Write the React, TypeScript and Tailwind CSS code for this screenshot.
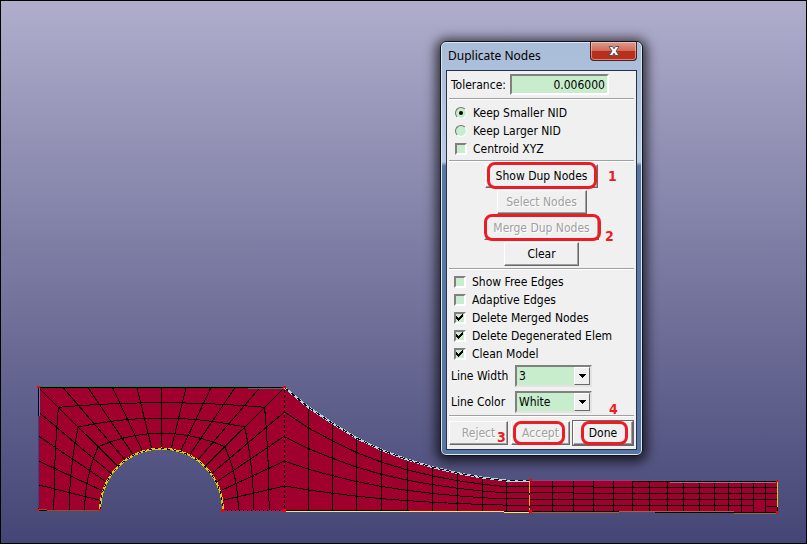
import type { ReactNode } from 'react'
import { clsx } from 'clsx'

type Point = [number, number]

const mix = (a: Point, b: Point, t: number): Point => [a[0] + (b[0] - a[0]) * t, a[1] + (b[1] - a[1]) * t]
const toPath = (points: Point[]) => 'M' + points.map((p) => `${p[0].toFixed(1)} ${p[1].toFixed(1)}`).join('L')

// Plate with the circular cut-out: outer edge, inner arc
const outer: Point[] = [
    [38.5, 510], [38.5, 485], [38.5, 461], [38.5, 436], [38.5, 412], [38.5, 387.5],
    [63, 387.5], [88, 387.5], [112.5, 387.5], [137, 387.5], [161.5, 387.5],
    [186, 387.5], [211, 387.5], [235, 387.5], [260, 387.5], [284.5, 387.5],
    [284.5, 412], [284.5, 436], [284.5, 461], [284.5, 486], [284.5, 510],
]
const arc: Point[] = outer.map((_, i) => {
    const a = Math.PI - (i * Math.PI) / 20
    return [161.5 + 61.5 * Math.cos(a), 510 - 61.5 * Math.sin(a)]
})

// Fillet and shank: top and bottom node of every column
const curve: Point[] = [
    [284.5, 387.5], [308, 407], [332, 423], [356.5, 438], [381.5, 450], [407, 459.5],
    [432, 467], [457, 473], [482, 477.5], [506, 480.5], [529.5, 480.5],
]
const shank: Point[] = [529.5, 552.5, 573.5, 593.5, 613.5, 632.5, 649.5, 667.5, 683.5, 699.5, 714.5, 728.5, 741.5, 753.5, 765.5, 777.5].map(
    (x) => [x, 480.5 + (x - 529.5) / 200],
)
const floor = (p: Point): Point => [p[0], 510.5 + (p[0] - 284.5) / 300]

function ModelMesh() {
    const rings = [0.25, 0.5, 0.75].map((t) => toPath(outer.map((p, i) => mix(p, arc[i], t))))
    const spokes = outer.map((p, i) => toPath([p, arc[i]]))
    const strips = [curve, shank].flatMap((top) => [
        ...[0.2, 0.4, 0.6, 0.8].map((t) => toPath(top.map((p) => mix(p, floor(p), t)))),
        ...top.map((p) => toPath([p, floor(p)])),
    ])

    return (
        <svg width="807" height="544" viewBox="0 0 807 544" className="absolute -top-px -left-px" role="img" aria-label="Finite element mesh">
            <g fill="#a0002e">
                <path d={toPath([...outer, ...[...arc].reverse()]) + 'Z'} />
                <path d={toPath([...curve, ...shank, [777.5, 512], [284.5, 510.5]]) + 'Z'} />
            </g>
            <g fill="none" stroke="#000" shapeRendering="crispEdges">
                {[...rings, ...spokes, ...strips].map((d, i) => (
                    <path key={i} d={d} />
                ))}
                <path d={toPath(outer)} />
                <path d="M38.5 510.5H100M223 510.5H284.5L529.5 511.5L777.5 512.5" />
            </g>
            <g fill="none" shapeRendering="crispEdges">
                <path d={toPath(arc)} stroke="#dccd00" strokeWidth="2" />
                <path d={toPath(arc)} stroke="#000" strokeDasharray="3 3" />
                <path d="M39 386.5H248" stroke="#1f8a4c" />
                <path d="M248 388.5H284" stroke="#51735c" />
                <path d="M39.5 388V416" stroke="#4c7fc4" />
                <path d="M38.5 416V508" stroke="#294a8a" />
                <path d="M39 509.5H47M47 510.5H100" stroke="#9a4b20" />
                <path d="M224 510.5H284" stroke="#d0003c" strokeDasharray="3 1" />
                <path d="M284.5 388V508" stroke="#d0003c" strokeDasharray="2 3" />
                <path d={toPath(curve)} stroke="#add8e0" strokeWidth="2" />
                <path d={toPath(curve)} stroke="#000" strokeDasharray="5 3" />
                <path d={toPath(shank)} stroke="#000" />
                <path d="M285 511.5H504M504 512.5H529" stroke="#ffe860" />
                <path d="M529.5 482V511" stroke="#ffa51e" strokeDasharray="11 2" />
                <path d="M532 480.5H670" stroke="#8d4474" />
                <path d="M670 482.5H776" stroke="#a07080" />
                <path d="M532 512.5H619M619 511.5H734M734 513.5H776" stroke="#9a6b36" />
                <path d="M777.5 482V507" stroke="#dccd00" />
            </g>
            <path
                fill="#ff0000"
                d="M37 386h3v2h-3zM37 509h2v2h-2zM99 509h2v2h-2zM221 509h3v3h-3zM283 386h3v2h-3zM283 509h3v3h-3zM529 479h3v2h-3zM529 510h3v3h-3zM776 480h2v2h-2zM776 511h2v3h-2z"
            />
        </svg>
    )
}

function Divider() {
    return <div className="h-0.5 shrink-0 border-t border-[#a0a0a0] bg-white" />
}

function Check({ label, checked }: { label: string; checked?: boolean }) {
    return (
        <label className="flex h-[18px] items-center gap-1.5">
            <span className="relative flex">
                <input
                    type="checkbox"
                    defaultChecked={checked}
                    className="peer size-3 appearance-none border-2 border-t-[#808080] border-r-white border-b-white border-l-[#808080] bg-[#c7edcc]"
                />
                <svg viewBox="0 0 12 12" className="pointer-events-none absolute inset-0 hidden size-3 peer-checked:block" shapeRendering="crispEdges">
                    <path d="M2 4h1v1h1v1h1v-1h1v-1h1v-1h1v-1h1v3h-1v1h-1v1h-1v1h-1v1h-1v-1h-1v-1h-1z" />
                </svg>
            </span>
            {label}
        </label>
    )
}

function Radio({ label, checked }: { label: string; checked?: boolean }) {
    return (
        <label className="flex h-[18px] items-center gap-1.5">
            <span className="relative flex">
                <input
                    type="radio"
                    name="keep"
                    defaultChecked={checked}
                    className="peer size-3 appearance-none rounded-full border border-t-[#707070] border-r-white border-b-white border-l-[#707070] bg-[#c7edcc]"
                />
                <span className="pointer-events-none absolute inset-1 hidden rounded-full bg-black peer-checked:block" />
            </span>
            {label}
        </label>
    )
}

function Mark({ className }: { className: string }) {
    return <span className={clsx('pointer-events-none absolute border-[3px] border-[#ed1c24]', className)} />
}

function Step({ className, children }: { className: string; children: ReactNode }) {
    return <span className={clsx('pointer-events-none absolute text-sm leading-4 font-bold text-[#ed1c24]', className)}>{children}</span>
}

function PushButton({ className, disabled, children }: { className: string; disabled?: boolean; children: ReactNode }) {
    return (
        <button
            disabled={disabled}
            className={clsx(
                'border border-t-white border-r-[#696969] border-b-[#696969] border-l-white shadow-[inset_-1px_-1px_#a0a0a0] disabled:text-[#a0a0a0] disabled:[text-shadow:1px_1px_#fff]',
                className,
            )}
        >
            {children}
        </button>
    )
}

function Dropdown({ id, label, value }: { id: string; label: string; value: string }) {
    return (
        <div className="flex h-[26px] items-center gap-1 pl-0.5">
            <label htmlFor={id} className="w-[60px]">
                {label}
            </label>
            <div className="relative">
                <select
                    id={id}
                    defaultValue={value}
                    className="block h-[22px] w-[77px] appearance-none border-2 border-t-[#808080] border-r-[#e3e3e3] border-b-[#e3e3e3] border-l-[#808080] bg-[#c7edcc] pl-0.5"
                >
                    <option>{value}</option>
                </select>
                <span className="pointer-events-none absolute top-0.5 right-0.5 flex h-[18px] w-4 items-center justify-center border border-t-white border-r-[#696969] border-b-[#696969] border-l-white bg-[#f0f0f0]">
                    <svg width="7" height="4" viewBox="0 0 7 4" shapeRendering="crispEdges">
                        <path d="M0 0h7v1h-1v1h-1v1h-1v1h-1v-1h-1v-1h-1v-1h-1z" />
                    </svg>
                </span>
            </div>
        </div>
    )
}

function DuplicateNodesDialog() {
    return (
        <section
            aria-label="Duplicate Nodes"
            className="absolute top-10 left-[439px] flex w-[203px] flex-col rounded-md border border-[#10141c] bg-linear-to-b from-[#a9bcd8] from-0% via-[#b9cce4] via-29% to-[#5a76a3] to-30% px-[5px] pb-[5px] font-['DejaVu_Sans_Condensed','DejaVu_Sans',sans-serif] text-xs text-black shadow-[inset_0_0_0_1px_#dce6f2,0_2px_12px_4px_rgba(0,0,0,0.7)]"
        >
            <header className="flex h-7 items-center justify-between pl-0.5">
                <h1 className="font-['Noto_Sans',sans-serif] text-xs">Duplicate Nodes</h1>
                <button
                    aria-label="Close"
                    className="flex h-[19px] w-[47px] items-center justify-center self-start rounded-b border border-t-0 border-[#4b1f24] bg-linear-to-b from-[#dc9c90] from-0% via-[#cf6a58] via-49% to-[#b8301c] to-50% shadow-[inset_0_0_0_1px_rgba(255,220,210,0.5)]"
                >
                    <svg width="12" height="10" viewBox="0 0 12 10">
                        <path d="M1 .5h3.500L6 2.800 7.500 .5H11L8 5l3 4.500H7.500L6 7.200 4.500 9.500H1L4 5z" fill="#fff" stroke="#4d4a5c" strokeWidth=".9" />
                    </svg>
                </button>
            </header>

            <div className="flex flex-col border border-[#25324a] bg-[#f0f0f0] px-0.5 pb-1">
                <div className="flex h-[27px] items-center gap-1 pl-0.5">
                    <label htmlFor="tolerance">Tolerance:</label>
                    <input
                        id="tolerance"
                        defaultValue="0.006000"
                        className="h-[21px] w-[99px] border-2 border-t-[#808080] border-r-white border-b-white border-l-[#808080] bg-[#c7edcc] pr-0.5 text-right"
                    />
                </div>
                <Divider />
                <div className="flex flex-col pt-1 pb-0.5 pl-1.5">
                    <Radio label="Keep Smaller NID" checked />
                    <Radio label="Keep Larger NID" />
                    <Check label="Centroid XYZ" />
                </div>
                <Divider />
                <div className="flex flex-col items-center gap-0.5 py-0.5">
                    <div className="relative">
                        <PushButton className="h-6 w-[113px]">Show Dup Nodes</PushButton>
                        <Mark className="-top-0.5 left-0.5 h-[27px] w-[110px] rounded-lg" />
                        <Step className="top-1 left-[123px]">1</Step>
                    </div>
                    <PushButton className="h-6 w-[90px]" disabled>Select Nodes</PushButton>
                    <div className="relative">
                        <PushButton className="h-6 w-[115px]" disabled>Merge Dup Nodes</PushButton>
                        <Mark className="-top-0.5 left-0 h-[27px] w-[117px] rounded-lg" />
                        <Step className="top-3 left-[121px]">2</Step>
                    </div>
                    <PushButton className="h-6 w-[75px]">Clear</PushButton>
                </div>
                <Divider />
                <div className="flex flex-col pt-[3px] pl-[5px]">
                    <Check label="Show Free Edges" />
                    <Check label="Adaptive Edges" />
                    <Check label="Delete Merged Nodes" checked />
                    <Check label="Delete Degenerated Elem" checked />
                    <Check label="Clean Model" checked />
                </div>
                <div className="flex flex-col">
                    <Dropdown id="line-width" label="Line Width" value="3" />
                    <Dropdown id="line-color" label="Line Color" value="White" />
                </div>
                <Divider />
                <div className="flex gap-[3px] pt-1">
                    <div className="relative">
                        <PushButton className="h-6 w-[59px]" disabled>Reject</PushButton>
                        <Step className="top-2 left-12">3</Step>
                    </div>
                    <div className="relative">
                        <PushButton className="h-6 w-[59px]" disabled>Accept</PushButton>
                        <Mark className="top-0 left-0.5 h-6 w-[52px] rounded-lg" />
                    </div>
                    <div className="relative">
                        <PushButton className="h-6 w-[60px] outline outline-[#696969]">Done</PushButton>
                        <Mark className="top-0 left-2 h-6 w-[47px] rounded-lg" />
                        <Step className="-top-5 left-9">4</Step>
                    </div>
                </div>
            </div>
        </section>
    )
}

export default function App() {
    return (
        <main className="relative min-h-screen overflow-hidden border border-black bg-linear-to-b from-[#b0aecc] to-[#464676]">
            <ModelMesh />
            <DuplicateNodesDialog />
        </main>
    )
}
